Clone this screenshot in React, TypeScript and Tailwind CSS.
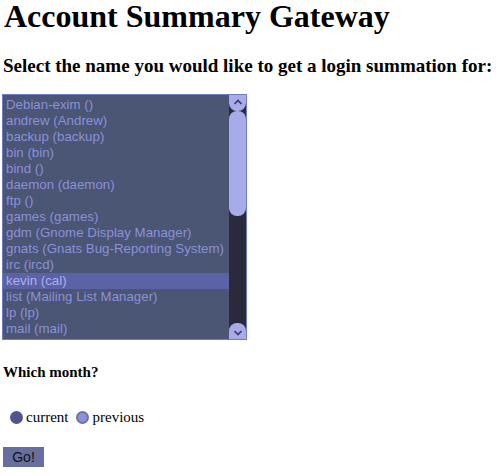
const users = [
  "Debian-exim ()",
  "andrew (Andrew)",
  "backup (backup)",
  "bin (bin)",
  "bind ()",
  "daemon (daemon)",
  "ftp ()",
  "games (games)",
  "gdm (Gnome Display Manager)",
  "gnats (Gnats Bug-Reporting System)",
  "irc (ircd)",
  "kevin (cal)",
  "list (Mailing List Manager)",
  "lp (lp)",
  "mail (mail)",
];

function Scrollbar() {
  return (
    <div className="w-[17px] bg-[#2b2a3d] flex flex-col">
      {/* up arrow */}
      <div className="h-[16px] bg-[#a8abea] rounded-b-[8px] flex justify-center pt-[3px]">
        <svg width="10" height="8" viewBox="0 0 10 8">
          <path d="M1.5 6 L5 2.5 L8.5 6" fill="none" stroke="#3a3a5a" strokeWidth="1.6" />
        </svg>
      </div>
      {/* thumb */}
      <div className="h-[105px] bg-[#a8abea] rounded-[8px]" />
      <div className="flex-1" />
      {/* down arrow */}
      <div className="h-[16px] bg-[#a8abea] rounded-t-[8px] flex justify-center items-end pb-[2px]">
        <svg width="10" height="8" viewBox="0 0 10 8">
          <path d="M1.5 2 L5 5.5 L8.5 2" fill="none" stroke="#3a3a5a" strokeWidth="1.6" />
        </svg>
      </div>
    </div>
  );
}

export default function App() {
  return (
    <div className="min-h-screen bg-white px-[2px] text-black" style={{ fontFamily: '"Liberation Serif", serif' }}>
      <h1 className="text-[32px] font-bold leading-[32px] pl-[2px]">Account Summary Gateway</h1>

      <h3 className="text-[19px] font-bold leading-[22px] pl-[1px] mt-[23px]">
        Select the name you would like to get a login summation for:
      </h3>

      {/* user list */}
      <div className="mt-[17px] w-[245px] h-[246px] border border-[#6f7cc0] bg-[#4b5574] flex">
        <ul className="flex-1 pt-[2px] text-[13.3px] leading-[16px] text-[#8a91d8]" style={{ fontFamily: '"Liberation Sans", Arial, sans-serif' }}>
          {users.map((u) => (
            <li key={u} className={u === "kevin (cal)" ? "pl-[3px] bg-[#5b62a6] text-[#aab0f0]" : "pl-[3px]"}>
              {u}
            </li>
          ))}
        </ul>
        <Scrollbar />
      </div>

      <h4 className="mt-[23px] text-[15px] font-bold leading-[18px] pl-[1px]">Which month?</h4>

      <div className="mt-[27px] flex items-center text-[15px] pl-[8px] leading-[18px]">
        <span className="w-[13px] h-[13px] rounded-full bg-[#4f5590] mr-[3px]" />
        <span className="mr-[8px]">current</span>
        <span className="w-[13px] h-[13px] rounded-full bg-[#8d92d6] border-[2px] border-[#6c72b0] mr-[3px]" />
        <span>previous</span>
      </div>

      <button
        className="mt-[21px] ml-[1px] w-[41px] h-[20px] bg-[#686e9e] text-[#111] text-[14px] leading-[20px]"
        style={{ fontFamily: '"Liberation Sans", Arial, sans-serif' }}
      >
        Go!
      </button>
    </div>
  );
}
